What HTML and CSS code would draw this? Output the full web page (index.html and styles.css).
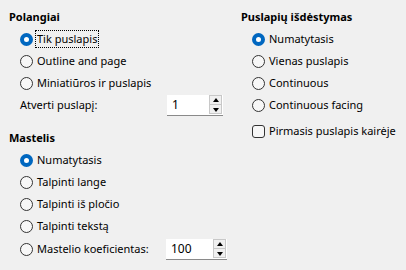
FILE: index.html
```html
<!DOCTYPE html>
<html lang="lt">
<head>
<meta charset="utf-8">
<link rel="stylesheet" href="styles.css">
</head>
<body>
<div class="dialog">
  <div class="col left">
    <div class="heading">Polangiai</div>
    <div class="group">
      <div class="row"><span class="radio on"></span><span class="label focus">Tik puslapis</span></div>
      <div class="row"><span class="radio"></span><span class="label">Outline and page</span></div>
      <div class="row"><span class="radio"></span><span class="label">Miniatiūros ir puslapis</span></div>
      <div class="row spinrow">
        <span class="lead"><span class="label">Atverti puslapį:</span></span>
        <span class="spin"><span class="value">1</span><span class="btns"><span class="btn up"></span><span class="btn down"></span></span></span>
      </div>
    </div>
    <div class="heading second">Mastelis</div>
    <div class="group">
      <div class="row"><span class="radio on"></span><span class="label">Numatytasis</span></div>
      <div class="row"><span class="radio"></span><span class="label">Talpinti lange</span></div>
      <div class="row"><span class="radio"></span><span class="label">Talpinti iš pločio</span></div>
      <div class="row"><span class="radio"></span><span class="label">Talpinti tekstą</span></div>
      <div class="row spinrow tall">
        <span class="lead short"><span class="radio"></span><span class="label">Mastelio koeficientas:</span></span>
        <span class="spin wide"><span class="value">100</span><span class="btns"><span class="btn up"></span><span class="btn down"></span></span></span>
      </div>
    </div>
  </div>
  <div class="col right">
    <div class="heading">Puslapių išdėstymas</div>
    <div class="group">
      <div class="row"><span class="radio on"></span><span class="label">Numatytasis</span></div>
      <div class="row"><span class="radio"></span><span class="label">Vienas puslapis</span></div>
      <div class="row"><span class="radio"></span><span class="label">Continuous</span></div>
      <div class="row"><span class="radio"></span><span class="label">Continuous facing</span></div>
      <div class="row check"><span class="checkbox"></span><span class="label">Pirmasis puslapis kairėje</span></div>
    </div>
  </div>
</div>
</body>
</html>
```
FILE: styles.css
```css
html, body {
  margin: 0;
  padding: 0;
  background: #f0f0f0;
}
body {
  width: 406px;
  height: 270px;
  overflow: hidden;
  font-family: "Noto Sans", "Open Sans", sans-serif;
  font-size: 11px;
  color: #000;
}
.dialog {
  display: grid;
  grid-template-columns: 232px 1fr;
  padding: 9px 0 0 9px;
}
.heading {
  font-weight: bold;
  line-height: 16px;
  height: 16px;
  margin-bottom: 3px;
  white-space: nowrap;
}
.heading.second {
  margin-top: 14px;
}
.group {
  padding-left: 11px;
  display: flex;
  flex-direction: column;
}
.row {
  height: 22px;
  display: flex;
  align-items: center;
  line-height: 16px;
  white-space: nowrap;
}
.row.tall {
  height: 24px;
}
.row.check {
  margin-top: 4px;
}
.lead {
  display: flex;
  align-items: center;
  width: 147px;
  flex: none;
}
.lead.short {
  width: 146px;
}
.radio {
  width: 11px;
  height: 11px;
  border: 1px solid #333;
  border-radius: 50%;
  background: #f7f7f7;
  flex: none;
  margin-right: 4px;
  box-sizing: content-box;
}
.radio.on {
  width: 5px;
  height: 5px;
  border: 4px solid #0067c0;
  background: #fff;
}
.checkbox {
  width: 11px;
  height: 11px;
  border: 1px solid #333;
  border-radius: 3px;
  background: #f7f7f7;
  flex: none;
  margin-right: 4px;
}
.label.focus {
  outline: 1px dotted #000;
  margin-left: -1px;
  padding: 0 1px;
}
.spin {
  width: 56px;
  height: 21px;
  background: #fff;
  border-bottom: 1px solid #8a8a8a;
  box-sizing: border-box;
  display: flex;
  align-items: center;
  justify-content: space-between;
  padding-left: 5px;
}
.spin.wide {
  width: 61px;
}
.value {
  line-height: 16px;
  font-size: 12px;
}
.btns {
  display: flex;
  flex-direction: column;
  width: 13px;
  height: 19px;
  margin-right: 1px;
}
.btn {
  flex: 1;
  background: #f0f0f0;
  border: 1px solid #c8c8c8;
  position: relative;
}
.btn.up {
  border-bottom: none;
}
.btn::after {
  content: "";
  position: absolute;
  left: 3px;
  border-left: 3px solid transparent;
  border-right: 3px solid transparent;
}
.btn.up::after {
  top: 2px;
  border-bottom: 4px solid #000;
}
.btn.down::after {
  top: 3px;
  border-top: 4px solid #000;
}
```
